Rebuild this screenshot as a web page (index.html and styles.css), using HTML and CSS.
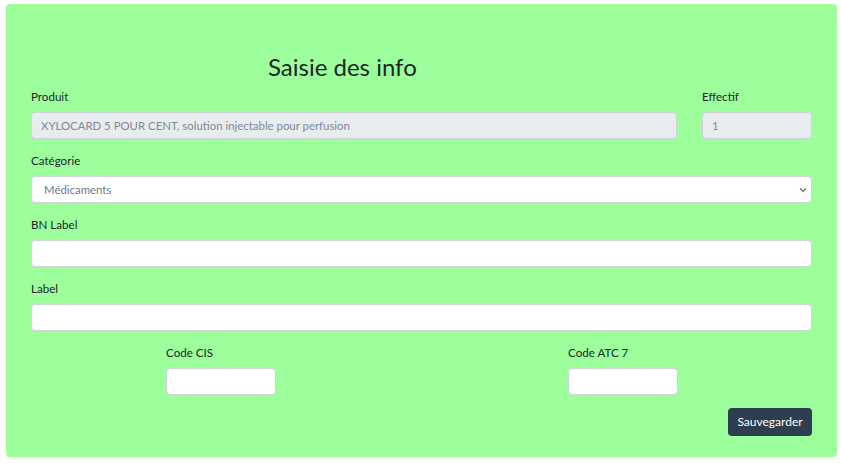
FILE: index.html
```html
<!DOCTYPE html>
<html lang="fr">
<head>
<meta charset="utf-8">
<title>Saisie des info</title>
<link rel="stylesheet" href="styles.css">
</head>
<body>
<form class="card">
  <h3 class="title">Saisie des info</h3>
  <div class="row">
    <div class="field grow">
      <label class="lbl">Produit</label>
      <input class="ctrl disabled" type="text" value="XYLOCARD 5 POUR CENT, solution injectable pour perfusion" disabled>
    </div>
    <div class="field small">
      <label class="lbl">Effectif</label>
      <input class="ctrl disabled" type="text" value="1" disabled>
    </div>
  </div>
  <div class="field">
    <label class="lbl">Catégorie</label>
    <div class="select-wrap">
      <select class="ctrl select">
        <option>Médicaments</option>
      </select>
      <svg class="chev" width="8" height="6" viewBox="0 0 8 6"><path d="M1 1.5 L4 4.5 L7 1.5" fill="none" stroke="#5a6570" stroke-width="1.2"/></svg>
    </div>
  </div>
  <div class="field">
    <label class="lbl">BN Label</label>
    <input class="ctrl" type="text">
  </div>
  <div class="field">
    <label class="lbl">Label</label>
    <input class="ctrl" type="text">
  </div>
  <div class="codes">
    <div class="field code cis">
      <label class="lbl">Code CIS</label>
      <input class="ctrl" type="text">
    </div>
    <div class="field code atc">
      <label class="lbl">Code ATC 7</label>
      <input class="ctrl" type="text">
    </div>
  </div>
  <div class="actions">
    <button class="btn" type="button">Sauvegarder</button>
  </div>
</form>
</body>
</html>
```
FILE: styles.css
```css
html, body {
  margin: 0;
  padding: 0;
  background: #ffffff;
}
body {
  font-family: Lato, "Open Sans", Arial, sans-serif;
  color: #212529;
  padding: 4px 4px 0 6px;
}
.card {
  box-sizing: border-box;
  width: 831px;
  height: 453px;
  background: #9cff9c;
  border-radius: 4px;
  padding: 49px 25px 0 25px;
  margin: 0;
}
.title {
  margin: 0 0 6px 237px;
  font-size: 24px;
  font-weight: 400;
  line-height: 1.2;
  color: #212529;
}
.row {
  display: flex;
  gap: 25px;
}
.grow { flex: 1; }
.small { width: 110px; }
.field {
  display: flex;
  flex-direction: column;
  margin-bottom: 13px;
}
.lbl {
  font-size: 11.6px;
  line-height: 18px;
  margin-bottom: 6px;
  color: #212529;
}
.ctrl {
  box-sizing: border-box;
  height: 27px;
  width: 100%;
  border: 1px solid #ced4da;
  border-radius: 4px;
  background: #ffffff;
  font-family: Lato, "Open Sans", Arial, sans-serif;
  font-size: 11.4px;
  color: #6c7a89;
  padding: 0 9px;
  margin: 0;
  outline: none;
}
.disabled {
  background: #e9ecef;
  color: #7d8a96;
}
.select-wrap {
  position: relative;
}
.select {
  appearance: none;
  -webkit-appearance: none;
  padding-left: 12px;
  color: #6c7a89;
}
.chev {
  position: absolute;
  right: 5px;
  top: 11px;
  pointer-events: none;
}
.codes {
  display: flex;
}
.code { width: 110px; }
.cis { margin-left: 135px; }
.atc { margin-left: 292px; }
.actions {
  display: flex;
  justify-content: flex-end;
}
.btn {
  height: 28px;
  width: 84px;
  padding: 0;
  border: none;
  border-radius: 4px;
  background: #2c3e50;
  color: #ffffff;
  font-family: Lato, "Open Sans", Arial, sans-serif;
  font-size: 12px;
}
```
